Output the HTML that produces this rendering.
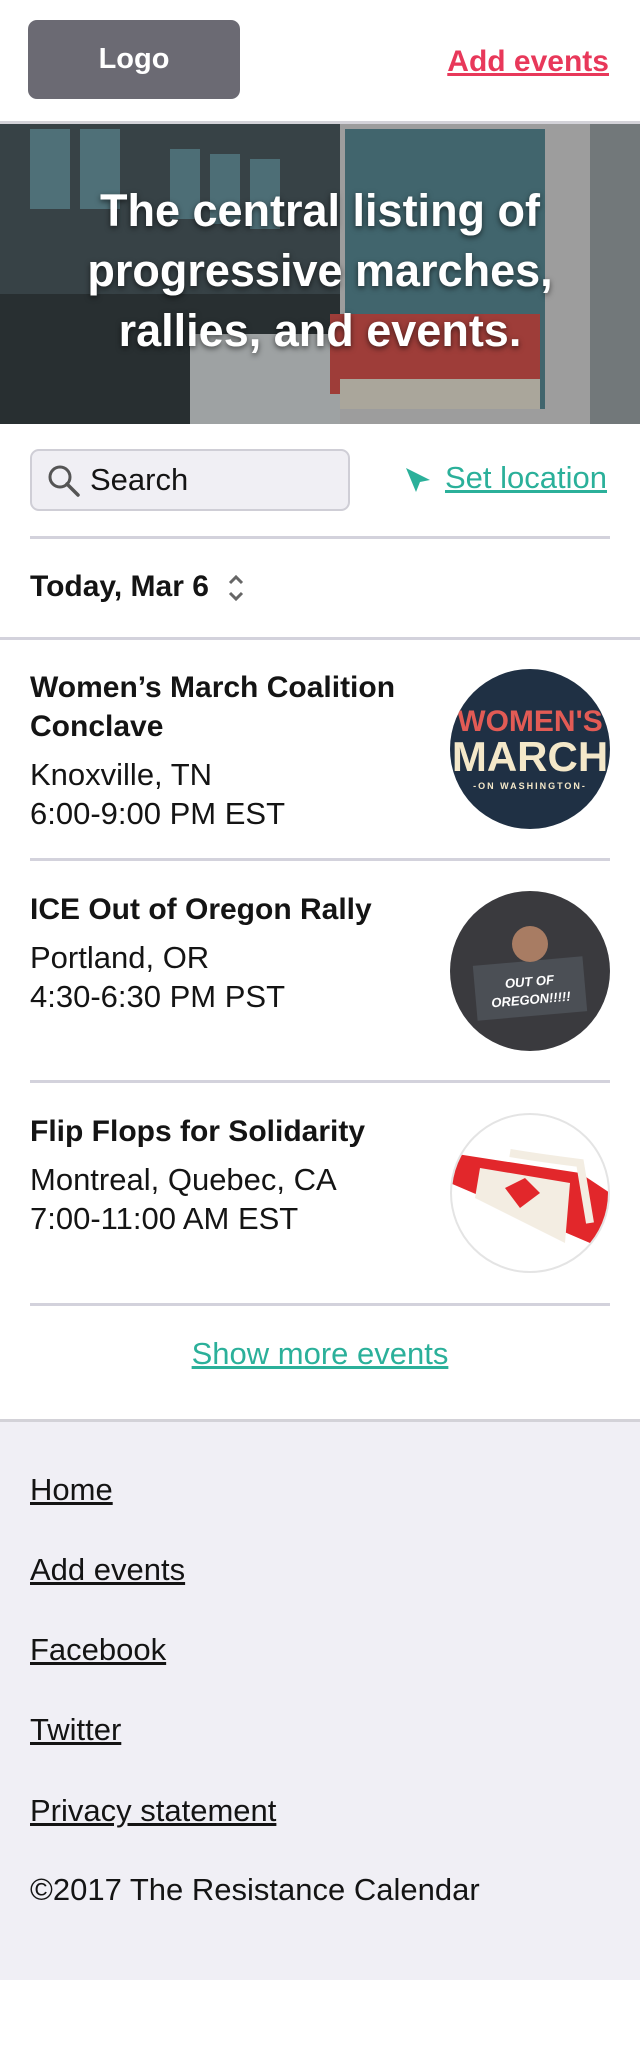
<!DOCTYPE html>
<html><head><meta charset="utf-8"><style>
*{margin:0;padding:0;box-sizing:border-box}
body{width:640px;height:2068px;background:#fff;font-family:"Liberation Sans",Arial,sans-serif;color:#141414;position:relative;overflow:hidden}
.a{position:absolute}
.logo{left:28px;top:20px;width:212px;height:79px;background:#6b6a73;border-radius:9px;color:#fff;font-weight:bold;font-size:29px;text-align:center;line-height:79px}
.add{right:31px;top:44px;line-height:36px;color:#e8385a;font-weight:bold;font-size:30px;text-decoration:underline}
.hero{left:0;top:121px;width:640px;height:303px;border-top:3px solid #d3d2d8;overflow:hidden;background:#3d4a4e}
.hero h1{position:absolute;left:0;right:0;top:57px;text-align:center;color:#fff;font-size:45px;line-height:60px;font-weight:bold;text-shadow:0 2px 6px rgba(0,0,0,.6)}
.search{left:30px;top:449px;width:320px;height:62px;border:2px solid #cfced6;border-radius:9px;background:#f0eff4;font-size:31px;line-height:58px;padding-left:58px}
.loc{right:33px;top:460px;line-height:36px;color:#2bb09a;font-size:31px;text-decoration:underline}
.hr{left:30px;width:580px;height:3px;background:#d3d2dc}
.date{left:30px;top:569px;line-height:36px;font-size:30px;font-weight:bold}
.t{left:30px;font-size:30px;font-weight:bold;line-height:39px}
.m{left:30px;font-size:31px;line-height:39px}
.c{left:450px;width:160px;height:160px;border-radius:50%;overflow:hidden}
.f{left:30px;font-size:31px;line-height:36px;text-decoration:underline}
</style></head><body>
<div class="a logo">Logo</div>
<div class="a add">Add events</div>
<div class="a hero">
<svg width="640" height="300" style="position:absolute;left:0;top:0">
<rect width="640" height="300" fill="#4a5558"/>
<rect x="0" y="0" width="340" height="300" fill="#3f4c50"/>
<rect x="30" y="5" width="40" height="80" fill="#5f8a93"/><rect x="80" y="5" width="40" height="80" fill="#5f8a93"/>
<rect x="170" y="25" width="30" height="70" fill="#5c8791"/><rect x="210" y="30" width="30" height="70" fill="#5c8791"/><rect x="250" y="35" width="30" height="70" fill="#5c8791"/>
<rect x="0" y="170" width="340" height="130" fill="#2b3335"/>
<rect x="190" y="210" width="150" height="90" fill="#c9cccc"/>
<rect x="340" y="0" width="250" height="300" fill="#c7c6c4"/>
<rect x="345" y="5" width="200" height="280" fill="#4d7b84"/>
<rect x="330" y="190" width="210" height="80" fill="#c9463f"/>
<rect x="340" y="255" width="200" height="30" fill="#d8d2c2"/>
<rect x="590" y="0" width="50" height="300" fill="#8e9596"/>
<rect width="640" height="300" fill="rgba(30,35,40,.25)"/>
</svg>
<h1>The central listing of<br>progressive marches,<br>rallies, and events.</h1>
</div>
<div class="a search"><svg class="a" style="left:14px;top:12px" width="36" height="36" viewBox="0 0 36 36"><circle cx="14" cy="14" r="10" fill="none" stroke="#555" stroke-width="3"/><path d="M21 21L32 32" stroke="#555" stroke-width="3.5" stroke-linecap="round"/></svg>Search</div>
<svg class="a" style="left:404px;top:466px" width="28" height="28" viewBox="0 0 28 28"><path d="M2 2L26 14L16 16L12 26Z" fill="#2bb09a"/></svg>
<div class="a loc">Set location</div>
<div class="a hr" style="top:536px"></div>
<div class="a date">Today, Mar 6</div>
<svg class="a" style="left:226px;top:572px" width="20" height="32" viewBox="0 0 20 32"><path d="M4 11L10 5L16 11M4 21L10 27L16 21" fill="none" stroke="#666" stroke-width="3"/></svg>
<div class="a" style="left:0;top:637px;width:640px;height:3px;background:#d3d2dc"></div>

<div class="a t" style="top:668px">Women’s March Coalition<br>Conclave</div>
<div class="a m" style="top:755px">Knoxville, TN<br>6:00-9:00 PM EST</div>
<div class="a c" style="top:669px;background:#1f3044;text-align:center;font-family:'Liberation Sans Narrow','Liberation Sans',sans-serif;font-weight:bold">
<div style="color:#e25b55;font-size:30px;margin-top:38px;line-height:30px">WOMEN'S</div>
<div style="color:#f4e8c9;font-size:42px;line-height:40px">MARCH</div>
<div style="color:#f4e8c9;font-size:9px;letter-spacing:2px;margin-top:4px">-ON WASHINGTON-</div></div>
<div class="a hr" style="top:858px"></div>

<div class="a t" style="top:890px">ICE Out of Oregon Rally</div>
<div class="a m" style="top:938px">Portland, OR<br>4:30-6:30 PM PST</div>
<div class="a c" style="top:891px;background:#3a3a3e">
<div class="a" style="left:25px;top:70px;width:110px;height:55px;background:#4b4f55;transform:rotate(-5deg);color:#fff;font-size:13px;font-weight:bold;font-style:italic;text-align:center;line-height:18px;padding-top:12px">OUT OF<br>OREGON!!!!!</div>
<div class="a" style="left:62px;top:35px;width:36px;height:36px;border-radius:50%;background:#a87c63"></div></div>
<div class="a hr" style="top:1080px"></div>

<div class="a t" style="top:1112px">Flip Flops for Solidarity</div>
<div class="a m" style="top:1160px">Montreal, Quebec, CA<br>7:00-11:00 AM EST</div>
<div class="a c" style="top:1113px;border:2px solid #e4e4e4;background:#fff">
<svg width="160" height="160" viewBox="0 0 160 160" style="position:absolute;left:-2px;top:-2px"><path d="M0 40L130 60L160 80L160 160L140 130L0 70Z" fill="#e2272b"/><path d="M30 55L120 70L115 130L25 85Z" fill="#f3ede2"/><path d="M55 75L75 65L90 80L70 95Z" fill="#e2272b"/><path d="M60 40Q90 45 130 50L140 110" fill="none" stroke="#f3ede2" stroke-width="8"/></svg></div>
<div class="a hr" style="top:1303px"></div>

<div class="a" style="left:0;width:640px;top:1336px;line-height:36px;text-align:center;font-size:31px;color:#2bb09a;text-decoration:underline">Show more events</div>
<div class="a" style="left:0;top:1419px;width:640px;height:561px;background:#f0eff5;border-top:3px solid #d3d2d8"></div>
<div class="a f" style="top:1472px">Home</div>
<div class="a f" style="top:1552px">Add events</div>
<div class="a f" style="top:1632px">Facebook</div>
<div class="a f" style="top:1712px">Twitter</div>
<div class="a f" style="top:1793px">Privacy statement</div>
<div class="a" style="left:30px;top:1872px;line-height:36px;font-size:31px">©2017 The Resistance Calendar</div>
</body></html>
